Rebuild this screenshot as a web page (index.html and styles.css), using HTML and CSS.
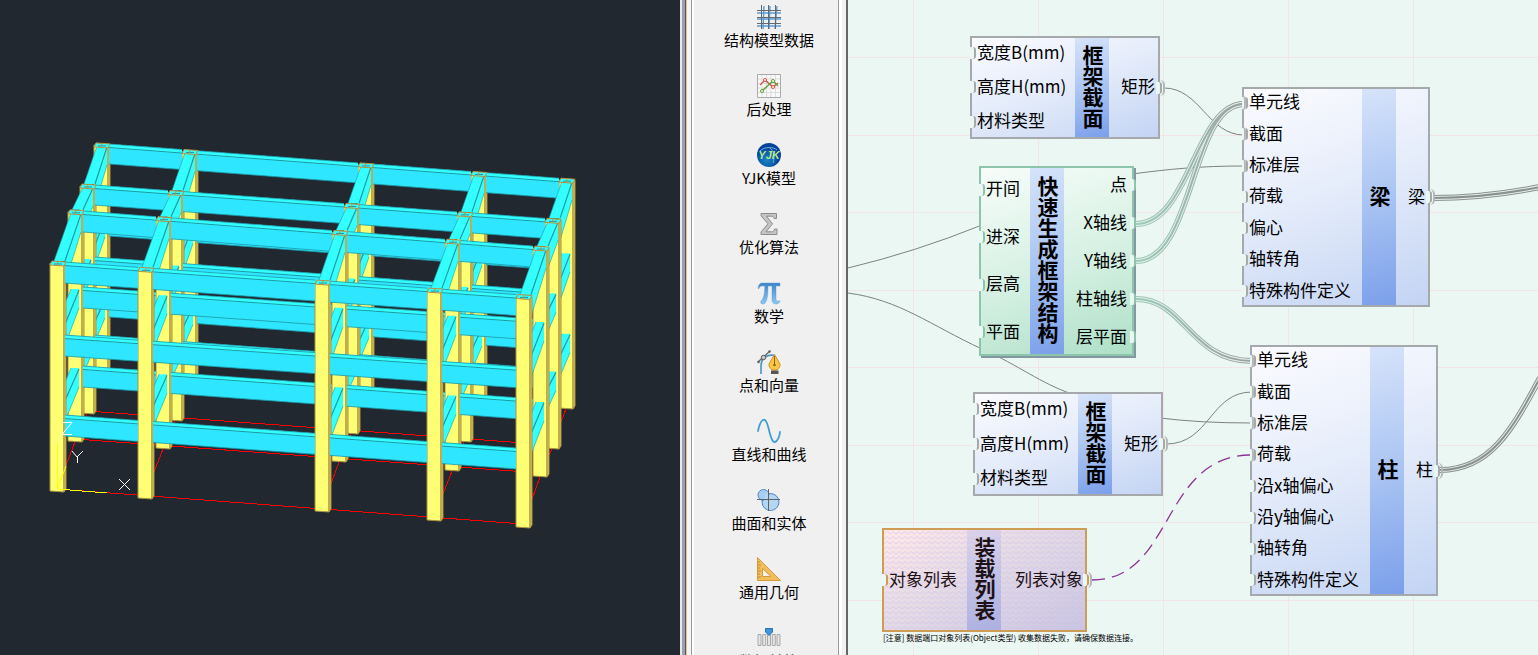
FILE: index.html
```html
<!DOCTYPE html>
<html lang="zh-CN">
<head>
<meta charset="utf-8">
<title>结构参数化建模</title>
<link rel="stylesheet" href="styles.css">
</head>
<body>
<main class="app">
  <section class="viewport" aria-label="三维框架视图">
    <svg class="model" id="model" viewBox="0 0 680 655" preserveAspectRatio="xMidYMid meet"></svg>
  </section>
  <div class="splitter"></div>
  <nav class="toolbox">
    <button class="tool"><svg class="icon" viewBox="0 0 24 24" fill="none"><g stroke="#5b9bd5" stroke-width="1.4"><path d="M0 8h24M0 14h24M0 21h24M7 1 6 24M13 1l-1 23M20 1l-2 23"/></g><g stroke="#66696c" stroke-width="1"><path d="M0 5.500h24M0 12.500h24M0 18.500h24M4.500 0v24M11.500 0v24M18.500 0v24"/></g></svg><span>结构模型数据</span></button>
    <button class="tool"><svg class="icon" viewBox="0 0 24 24" fill="none"><path d="M.5.5h23v23H.5z" fill="#f8f8f8" stroke="#aaa"/><path d="M5 1v22M9.500 1v22M14 1v22M18.500 1v22M1 5h22M1 9.500h22M1 14h22M1 18.500h22" stroke="#ddd"/><path d="m3 11 5-5 8 7 5-4" stroke="#d9534a" stroke-width="1.400"/><path d="m5 17 11-10 5 5" stroke="#5da036" stroke-width="1.400"/><g fill="#fff"><circle cx="8" cy="6" r="1.500" stroke="#d9534a"/><circle cx="16" cy="13" r="1.500" stroke="#d9534a"/><circle cx="5" cy="17" r="1.500" stroke="#5da036"/><circle cx="16" cy="7" r="1.500" stroke="#5da036"/></g></svg><span>后处理</span></button>
    <button class="tool"><svg class="icon" viewBox="0 0 24 24"><defs><radialGradient id="globe" cx=".4" cy=".7"><stop offset="0" stop-color="#1787c4"/><stop offset="1" stop-color="#05449a"/></radialGradient></defs><circle cx="12" cy="12" r="12" fill="url(#globe)"/><path d="M3 8C8 3 17 4 20 7M13 5c4 3 5 9 3 15" fill="none" stroke="#8fc6e8" stroke-width=".8"/><text class="globe-text" x="12" y="16" text-anchor="middle">YJK</text></svg><span>YJK模型</span></button>
    <button class="tool"><svg class="icon" viewBox="0 0 24 24"><path d="M4 1.500h15.500v5H17c-.3-1.800-1-2.300-3-2.300H9.500l6 7.600-6.500 8h5.500c2 0 2.500-.800 3-2.800h2.500v5.500H4v-2.500l7-8.200-7-8z" fill="#c4c4c4" stroke="#8c8c8c"/></svg><span>优化算法</span></button>
    <button class="tool"><svg class="icon" viewBox="0 0 24 24"><defs><linearGradient id="pi" x2="0" y2="1"><stop offset="0" stop-color="#3f86c8"/><stop offset="1" stop-color="#8bc8f4"/></linearGradient></defs><path d="M5 2h18v3h-4v13c0 2 2 3 4 1.500-.5 3-2.500 3.500-4 3.500-2.500 0-4-1.500-4-4V5h-4c0 8-.5 13-2.500 16.500-1.500 2.500-6 2-4.500-1.500C7 17 7.500 13 7.800 5H5C3 5 2.500 6 2 7.500H1C1.500 4 2.500 2 5 2z" fill="url(#pi)" stroke="#5796cc" stroke-width=".4"/></svg><span>数学</span></button>
    <button class="tool"><svg class="icon" viewBox="0 0 24 24" fill="none"><path d="M4 24V16C4 8 10 4 18 5.500" stroke="#4b93c4" stroke-width="1.600"/><path d="M1 12 13 1" stroke="#666" stroke-width="1.400"/><circle cx="6.500" cy="7.500" r="2.200" fill="#ccc" stroke="#555"/><circle cx="1.500" cy="12" r="1.300" fill="#666"/><circle cx="12.500" cy="1.500" r="1.300" fill="#666"/><path d="M17.500 4.500 12 14c-.5 2 1 4 3 6h5c2-2 3.500-4 3-6z" fill="#fbc640" stroke="#d3922a"/><path d="M17.500 6v8" stroke="#8a6520"/><circle cx="17.500" cy="15" r="1.300" fill="#8a6520"/><path d="M14 20.500h7.500V24H14z" fill="#555"/></svg><span>点和向量</span></button>
    <button class="tool"><svg class="icon" viewBox="0 0 24 24" fill="none"><path d="M1 12C3 2 8-6 11.500 9c3 13 5 16 8 13 2-2 3-5 3.500-9" stroke="#3f9fd0" stroke-width="1.800" stroke-linecap="round"/></svg><span>直线和曲线</span></button>
    <button class="tool"><svg class="icon" viewBox="0 0 24 24"><g fill="#a9cdec" stroke="#4b8cc9"><circle cx="13.500" cy="14" r="8.500"/><circle cx="6.500" cy="7" r="5.500"/></g><path d="M9 4c2 0 3 2 2.800 3.200 5-1.500 9 2 9.200 6.800 0 5-4 7.500-7.500 7.500C8 21.500 5 16 7 12z" fill="#b5d6f0"/><path d="M11.500 1v22M0 11.500h23" stroke="#555" stroke-width=".9"/></svg><span>曲面和实体</span></button>
    <button class="tool"><svg class="icon" viewBox="0 0 24 24"><path fill-rule="evenodd" d="M.5.5 23.500 23.500H.5zM5.500 11.500v8h8.500z" fill="#f3bd5c" stroke="#d59a3c"/><path d="M1 5h2M1 8h3M1 11h2M1 14h3M1 17h2M1 20h3" stroke="#b57c22" stroke-width=".8"/></svg><span>通用几何</span></button>
    <button class="tool"><svg class="icon" viewBox="0 0 24 24"><g fill="#e4e4e4" stroke="#aaa"><path d="M1 8.500h3v11H1zM5.700 8.500h3v11h-3zM10.500 8.500h3v11h-3zM15.300 8.500h3v11h-3zM20 8.500h3v11h-3z"/></g><path d="M8.500 2.500h7V6L12 9.500 8.500 6z" fill="#3f94da" stroke="#2b74b4"/></svg><span>数据转换</span></button>
  </nav>
  <section class="canvas" aria-label="节点画布">
    <svg class="wires" viewBox="848 0 690 655" preserveAspectRatio="xMinYMin slice" fill="none">
      <defs>
        <linearGradient id="mix" gradientUnits="userSpaceOnUse" x1="1137" y1="0" x2="1243" y2="0"><stop offset="0" stop-color="#9ccbb8"/><stop offset="1" stop-color="#9ba19f"/></linearGradient>
        <path id="wx" d="M1136 224C1190 224 1195 104 1244 104"/>
        <path id="wy" d="M1136 261C1195 261 1190 104 1244 104"/>
        <path id="wc" d="M1136 299C1185 299 1190 361 1252 361"/>
        <path id="wb" d="M1433 198C1470 198 1500 195 1540 187"/>
        <path id="wz" d="M1440 470C1490 470 1512 430 1540 378"/>
      </defs>
      <path class="grid-line" d="M913.5 0v655M1038.500 0v655M1163.500 0v655M1288.500 0v655M1413.500 0v655M848 57.500h690M848 135.500h690M848 212.500h690M848 290.500h690M848 367.500h690M848 445.500h690M848 522.500h690M848 600.500h690"/>
      <g class="wire">
        <path d="M1164 88C1200 88 1208 135 1244 135M848 268Q915 252 982 225M1132 174C1170 169 1200 166 1244 166M848 293C900 300 930 325 982 349C1020 366 1040 383 1072 394M1160 418Q1200 423 1252 423M1166 444C1210 444 1210 392 1252 392"/>
      </g>
      <g stroke="url(#mix)"><use href="#wx" stroke-width="6"/><use href="#wy" stroke-width="6"/><use href="#wc" stroke-width="6"/></g>
      <g stroke="#8b918f"><use href="#wb" stroke-width="6"/><use href="#wz" stroke-width="6"/></g>
      <g stroke="#e3f0ec" stroke-width="4"><use href="#wx"/><use href="#wy"/><use href="#wc"/><use href="#wb"/><use href="#wz"/></g>
      <g stroke="url(#mix)" stroke-width="2"><use href="#wx"/><use href="#wy"/><use href="#wc"/></g>
      <g stroke="#8b918f" stroke-width="2"><use href="#wb"/><use href="#wz"/></g>
      <path class="wire-dash" d="M1092 580C1175 580 1160 455 1252 455"/>
    </svg>

    <article class="node blue n-section-a">
      <ul class="ports in"><li>宽度B(mm)</li><li>高度H(mm)</li><li>材料类型</li></ul>
      <h2 class="title">框架截面</h2>
      <ul class="ports out"><li class="linked">矩形</li></ul>
    </article>
    <article class="node green n-frame">
      <ul class="ports in"><li>开间</li><li>进深</li><li>层高</li><li>平面</li></ul>
      <h2 class="title">快速生成框架结构</h2>
      <ul class="ports out"><li>点</li><li>X轴线</li><li>Y轴线</li><li>柱轴线</li><li>层平面</li></ul>
    </article>
    <article class="node blue n-beam">
      <ul class="ports in"><li class="linked">单元线</li><li class="linked">截面</li><li class="linked">标准层</li><li>荷载</li><li>偏心</li><li>轴转角</li><li>特殊构件定义</li></ul>
      <h2 class="title">梁</h2>
      <ul class="ports out"><li class="linked">梁</li></ul>
    </article>
    <article class="node blue n-column">
      <ul class="ports in"><li class="linked">单元线</li><li class="linked">截面</li><li class="linked">标准层</li><li class="linked">荷载</li><li>沿x轴偏心</li><li>沿y轴偏心</li><li>轴转角</li><li>特殊构件定义</li></ul>
      <h2 class="title">柱</h2>
      <ul class="ports out"><li class="linked">柱</li></ul>
    </article>
    <article class="node blue n-section-b">
      <ul class="ports in"><li>宽度B(mm)</li><li>高度H(mm)</li><li>材料类型</li></ul>
      <h2 class="title">框架截面</h2>
      <ul class="ports out"><li class="linked">矩形</li></ul>
    </article>
    <article class="node amber n-list">
      <svg class="waves" aria-hidden="true"><defs><pattern id="wave" width="6" height="5" patternUnits="userSpaceOnUse"><path d="M-1 4.700 0 4 3 1.500 6 4 7 4.700" fill="none" stroke="#d3b6ee" stroke-width=".8"/></pattern></defs><rect width="100%" height="100%" fill="url(#wave)"/></svg>
      <ul class="ports in"><li>对象列表</li></ul>
      <h2 class="title">装载列表</h2>
      <ul class="ports out"><li class="linked">列表对象</li></ul>
    </article>
    <p class="note">[注意] 数据端口对象列表(Object类型) 收集数据失败，请确保数据连接。</p>
  </section>
</main>
<script src="model.js"></script>
</body>
</html>
```
FILE: model.js
```js
// Frame rows from the back to the front: column x positions, foot y, beam top y per level.
const rows = [
  { x: [94, 182, 358, 471, 559], foot: [372, 379, 392, 400, 409], x0: 109, lev: [144, 216, 297], k: [.076, .076, .075], h: 20 },
  { x: [80, 168, 344, 457, 545], foot: [414, 421, 434, 442, 449], x0: 94, lev: [185, 257, 335], k: [.074, .074, .074], h: 20 },
  { x: [68, 156, 332, 445, 533], foot: [442, 449, 462, 471, 477], x0: 83, lev: [211, 287, 366], k: [.078, .071, .073], h: 21 },
  { x: [50, 138, 315, 427, 516], foot: [492, 499, 512, 521, 528], x0: 64, lev: [262, 335, 415], k: [.072, .070, .073], h: 21 }
];
// Edges of a cross beam at its front and back ends, per level.
const frontEdge = [15, 11, 9];
const frontLeft = [4, 2, 2];
const backEdge = [13, 11, 11];
const out = [];
const poly = (pts, fill, stroke) =>
  out.push(`<polygon points="${pts.map(p => p.map(n => n.toFixed(1)).join()).join(' ')}" fill="${fill}"${stroke ? ` stroke="${stroke}"` : ''}/>`);
const line = (a, b, c, w = 1, cls = '') =>
  out.push(`<line class="${cls}" x1="${a[0]}" y1="${a[1]}" x2="${b[0]}" y2="${b[1]}" stroke="${c}" stroke-width="${w}"/>`);
const EDGE = '#1d98a6', TOP = '#34ffff', FACE = '#2ee6ff', YEL = '#ffff73', BROWN = '#a8923f', RED = '#ff0000';
const yAt = (r, l, x) => r.lev[l] + (x - r.x0) * r.k[l];

rows.forEach((r, i) => {
  const next = rows[i + 1];
  const last = r.x.length - 1;
  line([r.x[0] + 7, r.foot[0] - 3], [r.x[last] + 7, r.foot[last] - 4], RED, 1, 'crisp');
  r.x.forEach((x, c) => {
    const top = yAt(r, 0, x) + 2, f = r.foot[c];
    poly([[x, top], [x + 14, top + 1], [x + 14, f], [x, f - 1]], YEL, BROWN);
    poly([[x + 14, top + 1], [x + 16, top], [x + 16, f - 3], [x + 14, f]], '#dcc95c', BROWN);
  });
  for (let l = 2; l >= 0; l--) {
    for (let c = 0; c < last; c++) {
      const a = r.x[c] + 15, b = r.x[c + 1], ya = yAt(r, l, a), yb = yAt(r, l, b);
      poly([[a, ya], [b, yb], [b, yb + r.h], [a, ya + r.h]], FACE);
      poly([[a, ya], [b, yb], [b, yb + 4], [a, ya + 4]], TOP);
      line([a, ya], [b, yb], EDGE, .8);
      line([a, ya + 3.5], [b, yb + 3.5], EDGE, 1);
      line([a, ya + r.h], [b, yb + r.h], EDGE, .8);
    }
  }
  if (next) {
    r.x.forEach((x, c) => {
      const f = next.x[c];
      line([x + 7, r.foot[c]], [f + 7, next.foot[c] - 4], RED, 1, 'crisp');
      for (let l = 2; l >= 0; l--) {
        const yb = yAt(r, l, x), yf = yAt(next, l, f);
        const bx = x + backEdge[l], fx = f + frontEdge[l], fl = f + frontLeft[l];
        poly([[bx, yb + 4], [bx, yb + 22], [fx, yf + 22], [fx, yf]], TOP);
        poly([[x + 3, yb + 3], [bx, yb + 3], [fx, yf], [fl, yf]], TOP);
        line([bx, yb + 4], [fx, yf], EDGE, 1.2);
        line([x + 3, yb + 3], [fl, yf], EDGE, .6);
        line([bx, yb + 22], [fx, yf + 22], EDGE, .6);
      }
    });
  }
  r.x.forEach(x => {
    const y = yAt(r, 0, x);
    poly([[x + 2, y], [x + 16, y + 1], [x + 14, y + 5], [x, y + 4]], TOP, '#b98f39');
    line([x + 4, y + 3], [x + 12, y + 3], EDGE);
    line([x + 8, y + 1], [x + 7, y + 4], '#b98f39');
  });
});
line([57.5, 489], [57.5, 445], '#ffff00');
line([57.5, 489], [66, 466], '#ffff00');
line([57.5, 489], [107, 493], '#ffff00', 1, 'crisp');
out.push('<g fill="none" stroke="#fff"><path d="M62 422.500h10L62 434.500h10M72 451l5 6 6-6M77.500 457v6M119 479l11 11M130 479l-11 11"/></g>');
document.getElementById('model').innerHTML = out.join('');
```
FILE: styles.css
```css
* { box-sizing: border-box; }
body { margin: 0; font-family: "Noto Sans CJK SC", sans-serif; color: #000; }
.app { display: flex; height: 100vh; overflow: hidden; }

.viewport { flex: 680 1 0; min-width: 0; background: #212830; }
.model { display: block; width: 100%; height: 100%; }
.crisp { shape-rendering: crispEdges; }
.splitter {
  flex: none; width: 14px;
  background: linear-gradient(90deg, #e8e8ea 0 2px, #9c9fad 2px 5px, #55565c 5px 6px, #e3bf8c 6px 7px, #f6f6f6 7px 11px, #999 11px 12px, #fff 12px 14px);
}
.toolbox {
  flex: none; width: 154px; padding: 5px 4px 0 0;
  display: flex; flex-direction: column; overflow: hidden;
  background: linear-gradient(90deg, #f0f0f0 0 144px, #999 144px 145px, #fff 145px 148px, #f2f2f2 148px 152px, #666 152px 154px);
}
.tool {
  flex: none; height: 69px; padding: 0; border: 0; background: none; color: #000;
  display: flex; flex-direction: column; align-items: center; gap: 1px;
  font: 15px/20px "Noto Sans CJK SC", sans-serif;
}
.icon { display: block; width: 24px; height: 24px; }
.globe-text { font: italic bold 11px "Liberation Sans", sans-serif; fill: #b6e58a; }

.canvas { position: relative; flex: 690 1 0; min-width: 0; overflow: hidden; background: #ebf7f3; }
.wires { position: absolute; inset: 0; width: 100%; height: 100%; }
.grid-line { stroke: #f3e4e7; stroke-width: 1; }
.wire { stroke: #7c8280; stroke-width: 1; }
.wire-dash { stroke: #8c3495; stroke-width: 1.3; stroke-dasharray: 13 7; }

.node {
  --edge: #a6a9ab;
  position: absolute; display: flex;
  background: linear-gradient(160deg, #fcfcff, #e3ebfa 50%, #c2d3f3);
  box-shadow: inset 0 0 0 2px var(--edge);
}
.green {
  --edge: #8cc5ab;
  background: linear-gradient(160deg, #f8fdfa, #d4f0e2 55%, #addfc6);
  box-shadow: inset 0 0 0 2px var(--edge), 2px 2px 0 #8297a0;
}
.amber {
  --edge: #cf9c56;
  background: linear-gradient(150deg, #ffe9e8, #e0d9e5 50%, #c8c5e2);
}
.waves { position: absolute; inset: 2px; width: calc(100% - 4px); height: calc(100% - 4px); opacity: .6; }
.ports { flex: 1; margin: 0; padding: 0; list-style: none; display: flex; flex-direction: column; }
.ports li {
  position: relative; flex: 1; display: flex; align-items: center;
  padding-bottom: 3px;
  font-size: 17px; line-height: 20px; white-space: nowrap;
}
.in li { padding-left: 7px; }
.out { flex: none; width: 51px; }
.out li { justify-content: flex-end; padding-right: 5px; }
.ports li::before {
  content: ""; position: absolute; top: calc(50% - 6px); width: 4px; height: 12px;
  border-right: 2px solid var(--edge); border-radius: 0 3px 3px 0; background: #ebf7f3;
}
.in li::before { left: 0; }
.out li::before { right: -2px; }
.ports .linked::after {
  content: ""; position: absolute; top: calc(50% - 8px); width: 5px; height: 16px;
  border-right: 2px solid #b4b8b8; border-radius: 0 5px 5px 0;
}
.in .linked::after { left: -3px; }
.out .linked::after { right: -5px; }
.title {
  position: relative;
  flex: none; width: 34px; margin: 2px 0; padding: 0 0 2px 2px;
  display: flex; align-items: center; justify-content: center;
  font-size: 21px; line-height: 32px; font-weight: 700; writing-mode: vertical-rl;
  background: linear-gradient(165deg, #d6e3fa, #aac5f3 50%, #7b9fea);
}
.amber .title { background: linear-gradient(165deg, #d0cbea99, #a3a9e0cc); color: #1e1216; }
.amber li { color: #1e1216; }

.n-section-a { left: 122px; top: 36px; width: 190px; height: 103px; }
.n-frame { left: 131px; top: 166px; width: 155px; height: 190px; }
.n-beam { left: 394px; top: 87px; width: 188px; height: 220px; }
.n-column { left: 402px; top: 345px; width: 188px; height: 251px; }
.n-section-b { left: 125px; top: 392px; width: 190px; height: 104px; }
.n-list { left: 34px; top: 528px; width: 205px; height: 104px; }
.n-frame .out { width: 70px; }
.n-frame .out li { padding-right: 7px; }
.n-beam .out, .n-column .out { width: 34px; }
.n-list .out { width: 86px; }
.n-list .out li { padding-right: 4px; }
.note { position: absolute; left: 35px; top: 632px; margin: 0; font-size: 8px; line-height: 12px; white-space: nowrap; }
```
